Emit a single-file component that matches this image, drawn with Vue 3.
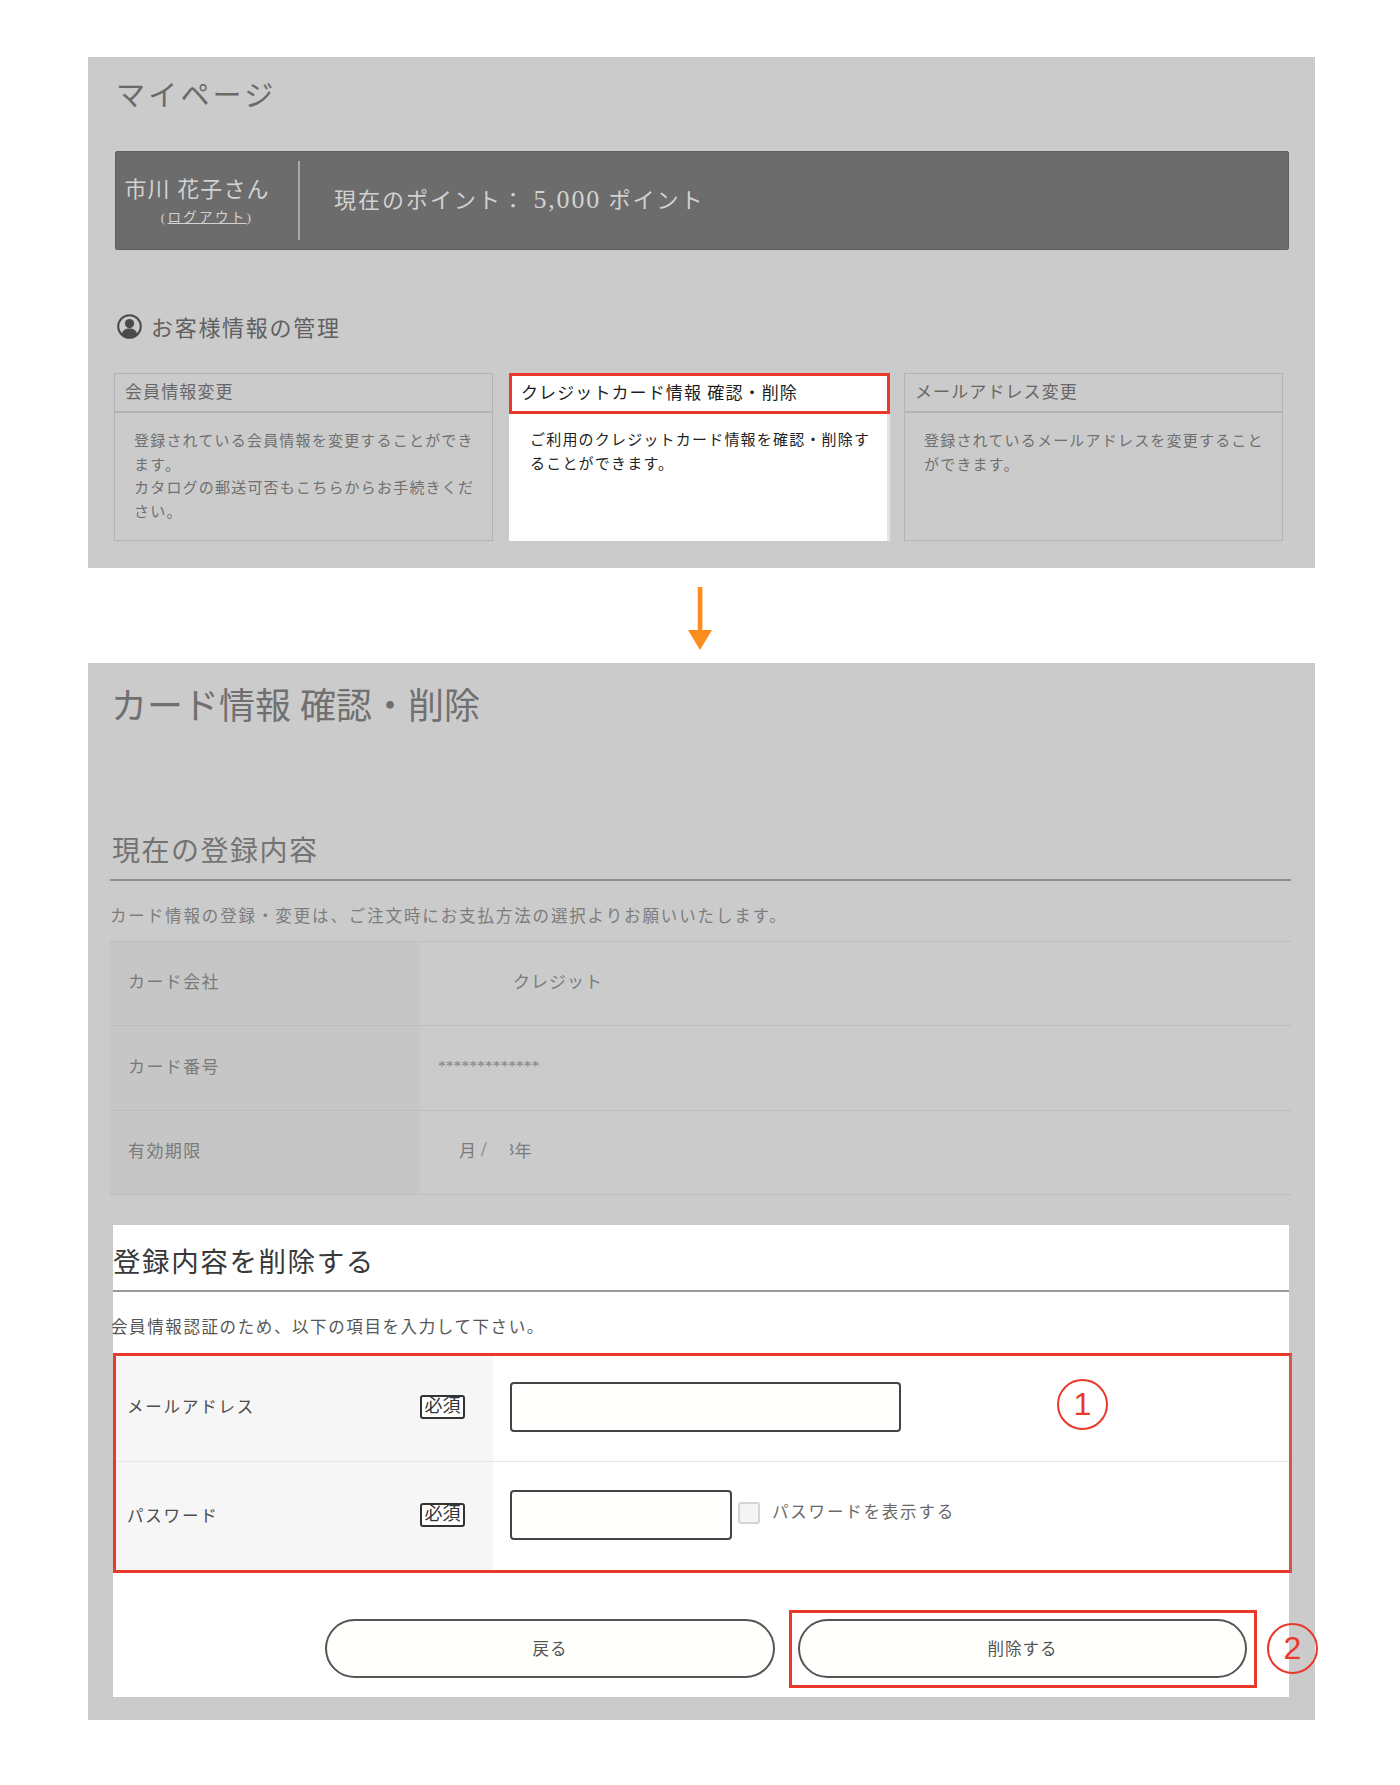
<script setup>
const cards = [
  { title: '会員情報変更', lines: ['登録されている会員情報を変更することができます。', 'カタログの郵送可否もこちらからお手続きください。'] },
  { title: 'クレジットカード情報 確認・削除', lines: ['ご利用のクレジットカード情報を確認・削除することができます。'], active: true },
  { title: 'メールアドレス変更', lines: ['登録されているメールアドレスを変更することができます。'] }
]
</script>

<template>
  <main class="page">
    <section class="panel mypage">
      <h1 class="my-title">マイページ</h1>
      <div class="bar">
        <div class="user">
          <span class="user-name">市川 花子さん</span>
          <a class="logout">(<u>ログアウト</u>)</a>
        </div>
        <div class="points">現在のポイント： <span class="num">5,000</span> ポイント</div>
      </div>
      <h2 class="manage">
        <svg class="manage-icon" viewBox="0 0 25 25" width="25" height="25" aria-hidden="true">
          <circle cx="12.5" cy="12.5" r="11.3" fill="none" stroke="#4a4a4a" stroke-width="2" />
          <circle cx="12.5" cy="9.6" r="4.6" fill="#4a4a4a" />
          <path d="M4.6 20.4c.9-4 3.8-5.9 7.9-5.9s7 1.9 7.9 5.9a11 11 0 0 1-15.8 0z" fill="#4a4a4a" />
        </svg>
        <span class="manage-text">お客様情報の管理</span>
      </h2>
      <div class="cards">
        <article v-for="c in cards" :key="c.title" class="card" :class="{ active: c.active }">
          <h3 class="card-head">{{ c.title }}</h3>
          <div class="card-body">
            <p v-for="l in c.lines" :key="l">{{ l }}</p>
          </div>
        </article>
      </div>
    </section>

    <div class="arrow-wrap">
      <svg width="24" height="63" viewBox="0 0 24 63" aria-hidden="true">
        <path d="M9.8 0h4.6v43H24L12 63 0 43h9.8z" fill="#fb8c1e" />
      </svg>
    </div>

    <section class="panel detail">
      <h1 class="detail-title">カード情報 確認・削除</h1>
      <div class="inner">
        <h2 class="current">現在の登録内容</h2>
        <p class="note">カード情報の登録・変更は、ご注文時にお支払方法の選択よりお願いいたします。</p>
        <div class="info">
          <div class="info-row">
            <div class="info-label">カード会社</div>
            <div class="info-value company">クレジット</div>
          </div>
          <div class="info-row">
            <div class="info-label">カード番号</div>
            <div class="info-value number">*************</div>
          </div>
          <div class="info-row last">
            <div class="info-label">有効期限</div>
            <div class="info-value expiry">月 <span class="slash">/</span><span class="cut"><span>3</span></span>年</div>
          </div>
        </div>
      </div>

      <div class="delete">
        <h2 class="delete-title">登録内容を削除する</h2>
        <p class="delete-note">会員情報認証のため、以下の項目を入力して下さい。</p>
        <div class="form">
          <div class="form-row first">
            <div class="form-label">
              <span>メールアドレス</span>
              <span class="required">必須</span>
            </div>
            <div class="form-field">
              <input class="input email" type="text" aria-label="メールアドレス" />
            </div>
          </div>
          <div class="form-row second">
            <div class="form-label">
              <span>パスワード</span>
              <span class="required">必須</span>
            </div>
            <div class="form-field">
              <input class="input password" type="text" aria-label="パスワード" />
              <span class="check"></span>
              <span class="show">パスワードを表示する</span>
            </div>
          </div>
          <span class="marker marker-one">1</span>
        </div>
        <div class="actions">
          <button class="btn" type="button">戻る</button>
          <div class="btn-wrap">
            <button class="btn" type="button">削除する</button>
            <span class="highlight"></span>
            <span class="marker marker-two">2</span>
          </div>
        </div>
      </div>
    </section>
  </main>
</template>

<style>
html, body { margin: 0; background: #fff; }
</style>

<style scoped>
.page {
  width: 1400px;
  box-sizing: border-box;
  padding: 57px 0 65px;
  font-family: "Liberation Serif", "Noto Sans CJK JP", serif;
  color: #666;
}
h1, h2, h3, p { margin: 0; font-weight: 400; }

.panel { width: 1227px; margin-left: 88px; background: #cbcbcb; box-sizing: border-box; }

.mypage { height: 511px; padding-top: 18px; }
.my-title {
  height: 42px; line-height: 42px; padding-left: 28px;
  font-size: 29px; letter-spacing: 3.2px; color: #6a6a6a;
}
.bar {
  display: flex; align-items: center;
  width: 1174px; height: 99px; margin: 34px 0 0 27px; box-sizing: border-box;
  background: #6c6c6c; border: 1px solid #5f5f5f; border-radius: 2px;
  color: #d2d2d2;
}
.user {
  display: flex; flex-direction: column; align-items: center; gap: 5px;
  width: 184px; height: 79px; box-sizing: border-box; padding: 15px 31px 0 11px;
  border-right: 2px solid #a8a8a8;
}
.user-name { font-size: 22px; line-height: 28px; letter-spacing: 1.1px; white-space: nowrap; }
.logout { margin-left: 20px; font-size: 13.5px; line-height: 18px; letter-spacing: 2.3px; white-space: nowrap; }
.points { margin-left: 34px; padding-bottom: 4px; font-size: 22px; letter-spacing: 2px; white-space: nowrap; }
.num { font-size: 26px; letter-spacing: 1.8px; }

.manage {
  display: flex; align-items: center; gap: 9px;
  height: 28px; margin: 63px 0 0 29px;
  font-size: 22px; letter-spacing: 1.7px; color: #606060;
}
.manage-text { padding-bottom: 3px; }
.manage-icon { flex: none; margin-top: -1px; }

.cards { display: flex; gap: 14px; margin: 32px 0 0 26px; }
.card {
  width: 379px; height: 168px; box-sizing: border-box;
  border: 1px solid #b3b3b3; color: #6f6f6f; position: relative;
}
.card-head {
  height: 39px; line-height: 38px; padding-left: 10px; box-sizing: border-box;
  border-bottom: 2px solid #b3b3b3;
  font-size: 17px; letter-spacing: 1.1px; color: #676767; white-space: nowrap;
}
.card-body { padding: 17px 19px 0; width: 342px; box-sizing: content-box; font-size: 15px; line-height: 23.7px; letter-spacing: 1.2px; }
.card.active {
  width: 381px; margin-left: 2px; background: #fff; color: #222;
  border: 0; border-right: 3px solid #e3e3e3;
}
.card.active .card-head {
  width: 381px; height: 41px; line-height: 35px; padding-left: 9px;
  border: 3px solid #e8392a; color: #1c1c1c;
}
.card.active .card-body { padding: 15px 21px 0; }

.arrow-wrap { display: flex; justify-content: center; height: 95px; box-sizing: border-box; padding-top: 19px; }

.detail { height: 1057px; padding-top: 24px; }
.detail-title {
  height: 40px; line-height: 40px; padding-left: 23px;
  font-size: 36px; letter-spacing: 0; color: #707070; white-space: nowrap;
}
.inner { width: 1181px; margin-left: 22px; }
.current {
  height: 45px; line-height: 36px; margin-top: 106px; padding-top: 1px; padding-left: 2px; box-sizing: content-box;
  border-bottom: 2px solid #8f8f8f;
  font-size: 28px; letter-spacing: 1.5px; color: #737373;
}
.note {
  height: 60px; line-height: 72px; box-sizing: border-box;
  font-size: 16.5px; letter-spacing: 1.87px; color: #7c7c7c; white-space: nowrap;
}
.info { border-top: 1px solid #bdbdbd; }
.info-row { display: flex; height: 85px; border-bottom: 1px solid #bdbdbd; box-sizing: border-box; }
.info-row:first-child, .info-row.last { height: 84px; }
.info-label {
  display: flex; align-items: center; width: 310px; padding: 0 0 6px 18px; box-sizing: border-box;
  background: #c6c6c6; font-size: 17px; letter-spacing: 1.4px; color: #7a7a7a;
}
.info-value { display: flex; align-items: center; padding-bottom: 6px; font-size: 17px; color: #7a7a7a; white-space: nowrap; }
.company { padding-left: 93px; letter-spacing: 1px; }
.number { padding-left: 18px; font-size: 15.6px; letter-spacing: 0; padding-bottom: 5px; }
.expiry { padding-left: 39px; }
.slash { margin-left: 5px; font-size: 20px; }
.cut { display: inline-block; width: 5px; height: 20px; line-height: 20px; margin-left: 23px; overflow: hidden; }
.cut span { display: block; margin-left: -4px; }

.delete {
  width: 1176px; height: 472px; margin: 30px 0 0 25px; box-sizing: border-box;
  background: #fff; color: #4a4a4a;
}
.delete-title {
  height: 67px; line-height: 36px; padding-top: 20px; box-sizing: border-box;
  border-bottom: 2px solid #9a9a9a;
  font-size: 27.5px; letter-spacing: 1.6px; color: #383838; white-space: nowrap;
}
.delete-note {
  height: 26px; line-height: 26px; margin: 23px 0 12px -2px;
  font-size: 16.5px; letter-spacing: 1.6px; color: #555; white-space: nowrap;
}
.form {
  position: relative; width: 1179px; height: 220px; box-sizing: border-box;
  border: 3px solid #e8392a; border-right-color: #cf5a4e;
}
.form-row { display: flex; }
.form-row.first { height: 106px; border-bottom: 1px solid #e6e6e6; box-sizing: border-box; }
.form-row.second { height: 108px; }
.form-label {
  display: flex; align-items: center; justify-content: space-between;
  width: 377px; padding: 0 28px 3px 11px; box-sizing: border-box;
  background: #f6f6f6; font-size: 16.5px; letter-spacing: 1.8px; color: #4c4c4c;
}
.form-row.first .form-label > span:first-child { padding-bottom: 2px; }
.required {
  width: 45px; height: 24px; box-sizing: border-box; line-height: 19px; text-align: center;
  border: 2px solid #333; border-radius: 3px; background: #fff;
  font-size: 18px; letter-spacing: 0; color: #333;
}
.form-field { display: flex; align-items: center; padding: 0 0 3px 17px; }
.input {
  height: 50px; box-sizing: border-box; padding: 0;
  background: #fffffd; border: 2px solid #444; border-radius: 4px; outline: none;
}
.email { width: 391px; }
.password { width: 222px; }
.check {
  width: 22px; height: 22px; margin: 0 0 4px 6px; box-sizing: border-box;
  background: #f4f4f4; border: 2px solid #d4d4d4; border-radius: 3px;
}
.show { margin-left: 12px; font-size: 16.5px; letter-spacing: 1.8px; color: #6a6a6a; white-space: nowrap; padding-bottom: 7px; }

.marker {
  position: absolute; display: flex; align-items: center; justify-content: center;
  width: 51px; height: 51px; box-sizing: border-box;
  border: 2px solid #e8392a; border-radius: 50%;
  font-family: "Liberation Sans", sans-serif; color: #e8392a; font-size: 32px;
}
.marker-one { left: 941px; top: 23px; }
.marker-two { left: calc(100% + 20px); top: 4px; }

.actions { display: flex; gap: 23px; padding: 46px 0 0 212px; }
.btn-wrap { position: relative; width: 449px; height: 59px; }
.btn {
  width: 450px; height: 59px; padding: 0 0 1px; box-sizing: border-box;
  background: #fffffc; border: 2px solid #555; border-radius: 30px;
  font-family: inherit; font-size: 16.5px; letter-spacing: 1px; color: #555;
}
.btn-wrap .btn { width: 449px; }
.highlight {
  position: absolute; inset: -9px -10px -10px -9px;
  border: 3px solid #e8392a;
}
</style>
